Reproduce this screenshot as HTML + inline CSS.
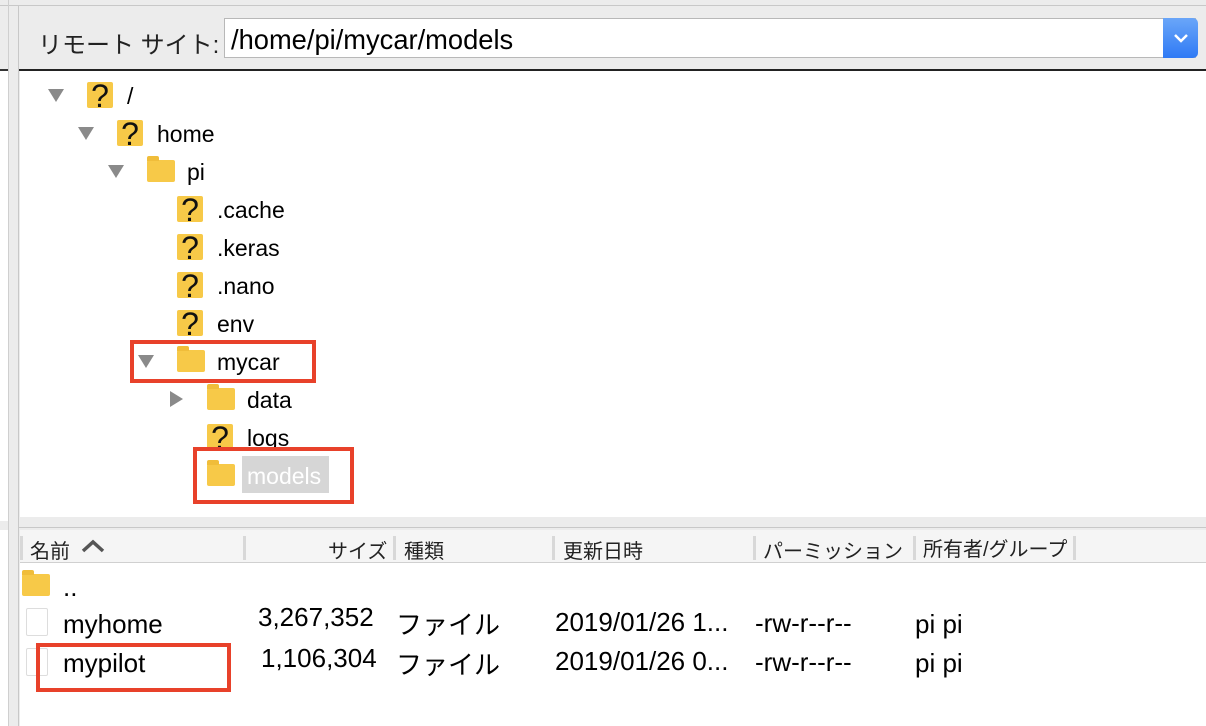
<!DOCTYPE html>
<html><head><meta charset="utf-8"><style>
*{margin:0;padding:0;box-sizing:border-box}
body{width:1206px;height:726px;overflow:hidden;background:#ececec;font-family:"Liberation Sans","Noto Sans CJK JP",sans-serif;position:relative;color:#000}
.a{position:absolute}
.tri{position:absolute;width:0;height:0;border-left:8px solid transparent;border-right:8px solid transparent;border-top:13px solid #8a8a8a}
.trir{position:absolute;width:0;height:0;border-top:8px solid transparent;border-bottom:8px solid transparent;border-left:13px solid #8a8a8a}
.fold{position:absolute;width:28px;height:22px;background:#f7c948;border-radius:2px}
.fold:before{content:"";position:absolute;left:0;top:-4px;width:12px;height:5px;background:#f0bd3a;border-radius:2px 2px 0 0}
.q{position:absolute;width:26px;height:26px;background:#f7c948;border-radius:2px;font:32px/28px "Liberation Sans",sans-serif;text-align:center;color:#111}
.t{position:absolute;font-size:23px;line-height:26px}
.red{position:absolute;border:4px solid #e8412a}
.h{position:absolute;top:535px;font-size:20px;color:#222}
.sep{position:absolute;top:536px;width:3px;height:24px;background:#d8d8d8}
.r{position:absolute;font-size:26px;line-height:30px}
.doc{position:absolute;width:22px;height:28px;border:1px solid #ddd;background:#fff;border-radius:2px}
</style></head><body>
<div class="a" style="left:0;top:5px;width:1206px;height:1px;background:#c8c8c8"></div>
<div class="a" style="left:8px;top:0;width:1px;height:726px;background:#cfcfcf"></div>
<div class="a" style="left:0;top:69px;width:8px;height:2px;background:#333"></div>
<div class="a" style="left:0;top:71px;width:8px;height:450px;background:#fff"></div>
<div class="a" style="left:0;top:530px;width:8px;height:196px;background:#fff"></div>
<div class="a" style="left:18px;top:5px;width:1px;height:721px;background:#c8c8c8"></div>
<div class="a" style="left:38px;top:25px;font-size:24px;color:#222">リモート サイト:</div>
<div class="a" style="left:224px;top:18px;width:972px;height:40px;background:#fff;border:1px solid #b8b8b8"></div>
<div class="a" style="left:231px;top:24px;font-size:27.3px">/home/pi/mycar/models</div>
<div class="a" style="left:1163px;top:18px;width:35px;height:40px;background:linear-gradient(#6aa6f8,#2f7af5);border-radius:0 5px 5px 0"></div>
<svg class="a" style="left:1171px;top:30px" width="20" height="16"><path d="M4 5 L10 11 L16 5" stroke="#fff" stroke-width="2.5" fill="none"/></svg>
<div class="a" style="left:19px;top:69px;width:1187px;height:2px;background:#222"></div>
<div class="a" style="left:20px;top:71px;width:1186px;height:446px;background:#fff"></div>
<div class="tri" style="left:48px;top:89px"></div><div class="q" style="left:87px;top:82px">?</div><div class="t" style="left:127px;top:83px">/</div>
<div class="tri" style="left:78px;top:127px"></div><div class="q" style="left:117px;top:120px">?</div><div class="t" style="left:157px;top:121px">home</div>
<div class="tri" style="left:108px;top:165px"></div><div class="fold" style="left:147px;top:160px"></div><div class="t" style="left:187px;top:159px">pi</div>
<div class="q" style="left:177px;top:196px">?</div><div class="t" style="left:217px;top:197px">.cache</div>
<div class="q" style="left:177px;top:234px">?</div><div class="t" style="left:217px;top:235px">.keras</div>
<div class="q" style="left:177px;top:272px">?</div><div class="t" style="left:217px;top:273px">.nano</div>
<div class="q" style="left:177px;top:310px">?</div><div class="t" style="left:217px;top:311px">env</div>
<div class="tri" style="left:138px;top:355px"></div><div class="fold" style="left:177px;top:350px"></div><div class="t" style="left:217px;top:349px">mycar</div>
<div class="trir" style="left:170px;top:391px"></div><div class="fold" style="left:207px;top:388px"></div><div class="t" style="left:247px;top:387px">data</div>
<div class="q" style="left:207px;top:424px">?</div><div class="t" style="left:247px;top:425px">logs</div>
<div class="fold" style="left:207px;top:464px"></div>
<div class="a" style="left:242px;top:456px;width:87px;height:37px;background:#d6d6d6"></div><div class="t" style="left:247px;top:463px;color:#fff">models</div>
<div class="red" style="left:130px;top:340px;width:186px;height:43px"></div>
<div class="red" style="left:193px;top:447px;width:161px;height:57px"></div>
<div class="a" style="left:19px;top:527px;width:1187px;height:1px;background:#c8c8c8"></div>
<div class="a" style="left:20px;top:530px;width:1186px;height:196px;background:#fff"></div>
<div class="a" style="left:20px;top:530px;width:1186px;height:33px;background:#f5f5f5;border-bottom:1px solid #d0d0d0"></div>
<div class="sep" style="left:20px"></div>
<div class="h" style="left:30px">名前</div>
<svg class="a" style="left:80px;top:538px" width="26" height="16"><path d="M3 13 L13 4 L23 13" stroke="#555" stroke-width="3.5" fill="none"/></svg>
<div class="sep" style="left:243px"></div>
<div class="h" style="left:328px">サイズ</div>
<div class="sep" style="left:393px"></div>
<div class="h" style="left:404px">種類</div>
<div class="sep" style="left:552px"></div>
<div class="h" style="left:563px">更新日時</div>
<div class="sep" style="left:753px"></div>
<div class="h" style="left:763px">パーミッション</div>
<div class="sep" style="left:913px"></div>
<div class="h" style="left:923px;top:533px">所有者/グループ</div>
<div class="sep" style="left:1073px"></div>
<div class="fold" style="left:22px;top:574px"></div><div class="r" style="left:63px;top:572px">..</div>
<div class="doc" style="left:26px;top:608px"></div><div class="r" style="left:63px;top:609px">myhome</div>
<div class="r" style="left:258px;top:602px">3,267,352</div><div class="r" style="left:396px;top:610px">ファイル</div>
<div class="r" style="left:555px;top:607px">2019/01/26 1...</div><div class="r" style="left:755px;top:608px">-rw-r--r--</div><div class="r" style="left:915px;top:609px">pi pi</div>
<div class="doc" style="left:26px;top:648px"></div><div class="r" style="left:63px;top:648px">mypilot</div>
<div class="r" style="left:261px;top:643px">1,106,304</div><div class="r" style="left:396px;top:650px">ファイル</div>
<div class="r" style="left:555px;top:646px">2019/01/26 0...</div><div class="r" style="left:755px;top:647px">-rw-r--r--</div><div class="r" style="left:915px;top:648px">pi pi</div>
<div class="red" style="left:36px;top:643px;width:195px;height:49px"></div>
</body></html>
